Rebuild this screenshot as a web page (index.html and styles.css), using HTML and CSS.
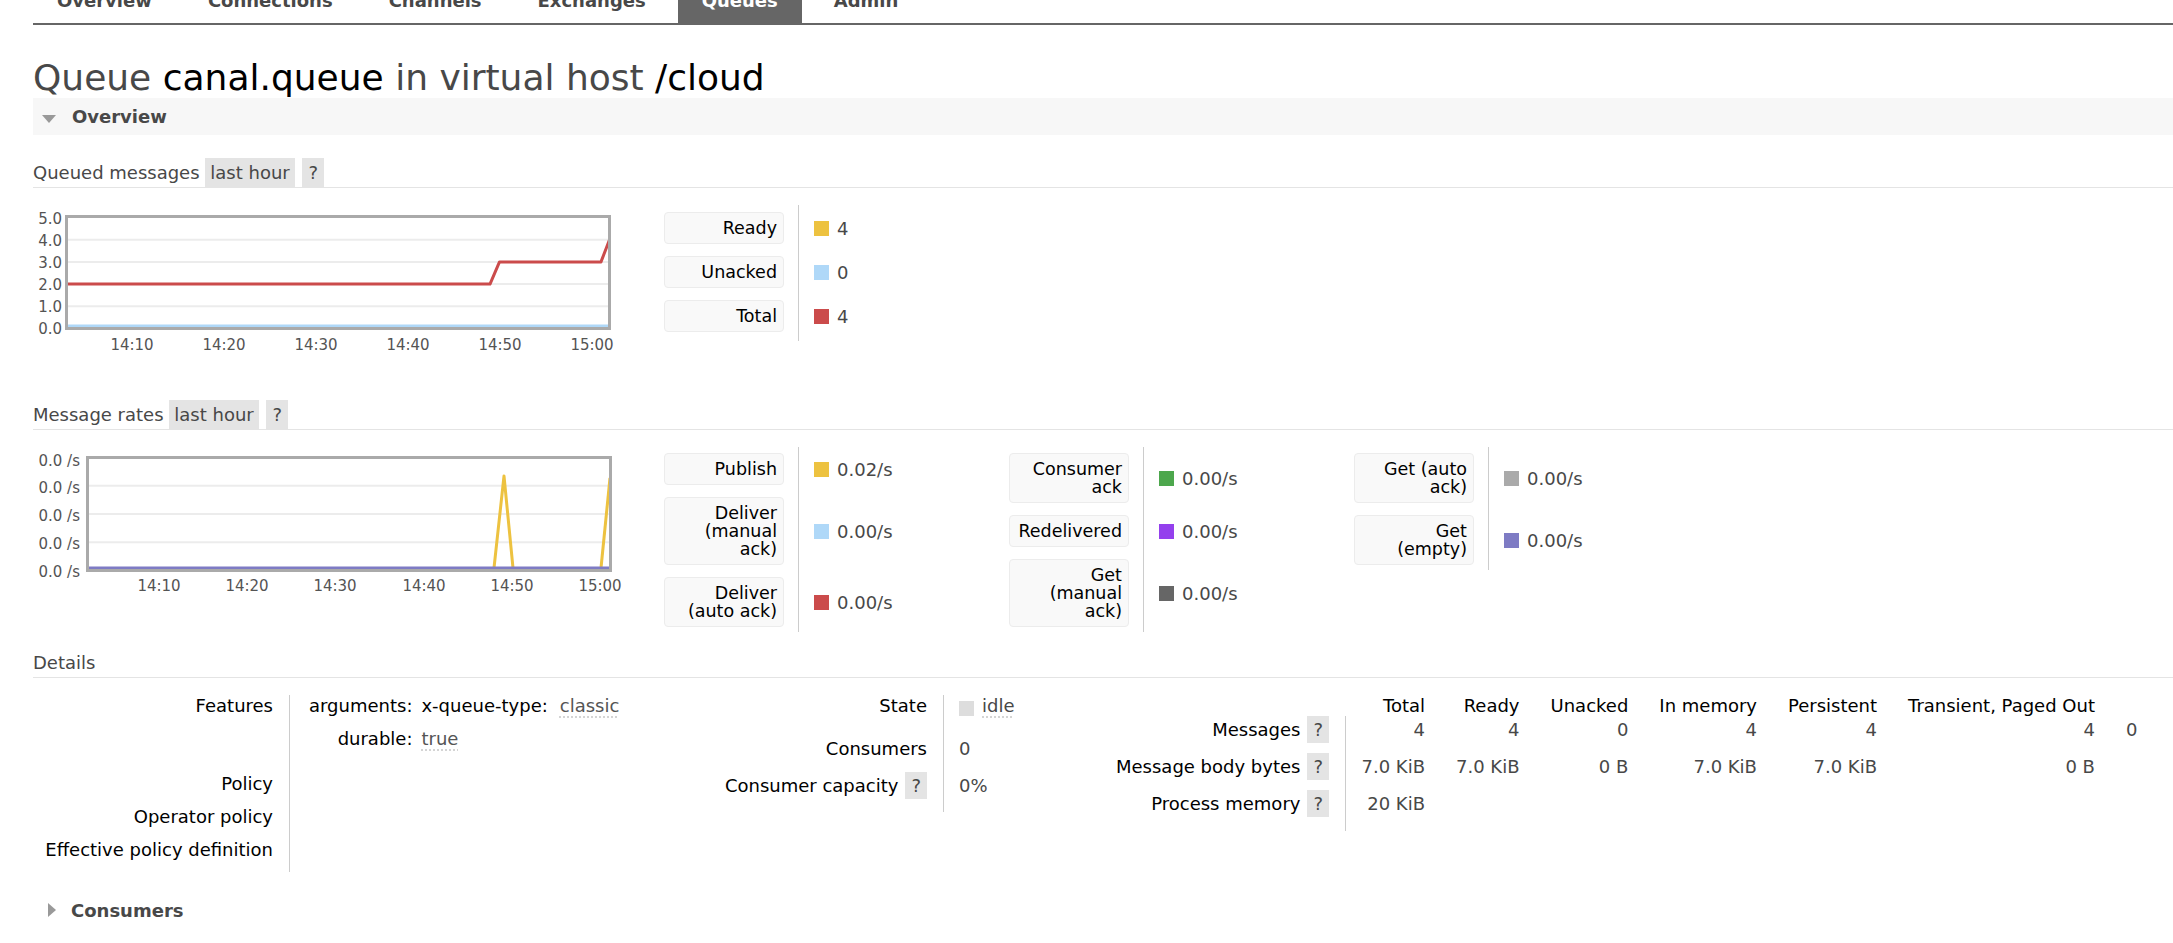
FILE: index.html
```html
<!DOCTYPE html>
<html lang="en">
<head>
  <meta charset="UTF-8">
  <meta name="viewport" content="width=device-width, initial-scale=1.0">
  <title>RabbitMQ Management</title>
  <link rel="stylesheet" href="styles.css">
</head>
<body>
<div id="menu">
  <ul>
    <li>Overview</li>
    <li>Connections</li>
    <li>Channels</li>
    <li>Exchanges</li>
    <li class="selected">Queues</li>
    <li>Admin</li>
  </ul>
</div>

<div id="main">
  <h1>Queue <b>canal.queue</b> in virtual host <b>/cloud</b></h1>

  <div class="section">
    <h2 class="section-head"><span class="tri-down"></span>Overview</h2>
    <div class="section-body">

      <h3>Queued messages <span class="pill">last hour</span> <span class="help">?</span></h3>
      <div class="chart-row">
        <svg class="chart" width="590" height="179" viewBox="0 0 590 179">
          <g class="grid">
            <line x1="35" y1="34.7" x2="575" y2="34.7"/>
            <line x1="35" y1="56.9" x2="575" y2="56.9"/>
            <line x1="35" y1="79.1" x2="575" y2="79.1"/>
            <line x1="35" y1="101.3" x2="575" y2="101.3"/>
          </g>
          <polyline class="s-blue" points="35,121 575,121"/>
          <polyline class="s-red" points="35,79.1 457,79.1 466.5,56.9 568,56.9 576.5,34.7"/>
          <rect class="frame" x="33.5" y="11.5" width="543" height="112"/>
          <g class="ylab">
            <text x="29" y="18.5">5.0</text>
            <text x="29" y="40.5">4.0</text>
            <text x="29" y="62.5">3.0</text>
            <text x="29" y="84.5">2.0</text>
            <text x="29" y="106.5">1.0</text>
            <text x="29" y="128.5">0.0</text>
          </g>
          <g class="xlab">
            <text x="99" y="144.5">14:10</text>
            <text x="191" y="144.5">14:20</text>
            <text x="283" y="144.5">14:30</text>
            <text x="375" y="144.5">14:40</text>
            <text x="467" y="144.5">14:50</text>
            <text x="559" y="144.5">15:00</text>
          </g>
        </svg>
        <div class="legends">
          <div class="legend rows-3 queued">
            <div class="lbl">Ready</div>
            <div class="sep"></div>
            <div class="val"><span class="sq c-yellow"></span>4</div>
            <div class="lbl">Unacked</div>
            <div class="val"><span class="sq c-blue"></span>0</div>
            <div class="lbl">Total</div>
            <div class="val"><span class="sq c-red"></span>4</div>
          </div>
        </div>
      </div>

      <h3>Message rates <span class="pill">last hour</span> <span class="help">?</span></h3>
      <div class="chart-row">
        <svg class="chart" width="590" height="179" viewBox="0 0 590 179">
          <g class="grid">
            <line x1="56" y1="38.75" x2="576" y2="38.75"/>
            <line x1="56" y1="67" x2="576" y2="67"/>
            <line x1="56" y1="95.25" x2="576" y2="95.25"/>
          </g>
          <polyline class="s-yellow" points="461,121 471,29 480,121"/>
          <polyline class="s-yellow" points="568,121 577,31"/>
          <polyline class="s-purple" points="56,121 576,121"/>
          <rect class="frame" x="54.5" y="10.5" width="523" height="113"/>
          <g class="ylab">
            <text x="47" y="18.5">0.0 /s</text>
            <text x="47" y="45.5">0.0 /s</text>
            <text x="47" y="73.5">0.0 /s</text>
            <text x="47" y="101.5">0.0 /s</text>
            <text x="47" y="129.5">0.0 /s</text>
          </g>
          <g class="xlab">
            <text x="126" y="143.5">14:10</text>
            <text x="214" y="143.5">14:20</text>
            <text x="302" y="143.5">14:30</text>
            <text x="391" y="143.5">14:40</text>
            <text x="479" y="143.5">14:50</text>
            <text x="567" y="143.5">15:00</text>
          </g>
        </svg>
        <div class="legends">
          <div class="legend rows-3">
            <div class="lbl">Publish</div>
            <div class="sep"></div>
            <div class="val"><span class="sq c-yellow"></span>0.02/s</div>
            <div class="lbl">Deliver<br>(manual<br>ack)</div>
            <div class="val"><span class="sq c-blue"></span>0.00/s</div>
            <div class="lbl">Deliver<br>(auto ack)</div>
            <div class="val"><span class="sq c-red"></span>0.00/s</div>
          </div>
          <div class="legend rows-3">
            <div class="lbl">Consumer<br>ack</div>
            <div class="sep"></div>
            <div class="val"><span class="sq c-green"></span>0.00/s</div>
            <div class="lbl">Redelivered</div>
            <div class="val"><span class="sq c-violet"></span>0.00/s</div>
            <div class="lbl">Get<br>(manual<br>ack)</div>
            <div class="val"><span class="sq c-dark"></span>0.00/s</div>
          </div>
          <div class="legend rows-2">
            <div class="lbl">Get (auto<br>ack)</div>
            <div class="sep"></div>
            <div class="val"><span class="sq c-grey"></span>0.00/s</div>
            <div class="lbl">Get<br>(empty)</div>
            <div class="val"><span class="sq c-lilac"></span>0.00/s</div>
          </div>
        </div>
      </div>

      <h3>Details</h3>
      <div class="details">
        <table class="facts f1">
          <tr>
            <th>Features</th>
            <td>
              <table class="mini">
                <tr>
                  <th>arguments:</th>
                  <td>
                    <table class="mini-inner">
                      <tr><th>x-queue-type:</th><td><abbr>classic</abbr></td></tr>
                    </table>
                  </td>
                </tr>
                <tr>
                  <th>durable:</th>
                  <td><abbr>true</abbr></td>
                </tr>
              </table>
            </td>
          </tr>
          <tr><th>Policy</th><td></td></tr>
          <tr><th>Operator policy</th><td></td></tr>
          <tr><th>Effective policy definition</th><td></td></tr>
        </table>

        <table class="facts f2">
          <tr class="state-row">
            <th>State</th>
            <td><span class="state-sq"></span><abbr>idle</abbr></td>
          </tr>
          <tr><th>Consumers</th><td>0</td></tr>
          <tr><th>Consumer capacity<span class="help-box">?</span></th><td>0%</td></tr>
        </table>

        <table class="facts f3">
          <tr class="head">
            <th></th>
            <th>Total</th>
            <th>Ready</th>
            <th>Unacked</th>
            <th>In memory</th>
            <th>Persistent</th>
            <th>Transient, Paged Out</th>
            <th></th>
          </tr>
          <tr>
            <th>Messages<span class="help-box">?</span></th>
            <td>4</td><td>4</td><td>0</td><td>4</td><td>4</td><td>4</td><td>0</td>
          </tr>
          <tr>
            <th>Message body bytes<span class="help-box">?</span></th>
            <td>7.0 KiB</td><td>7.0 KiB</td><td>0 B</td><td>7.0 KiB</td><td>7.0 KiB</td><td>0 B</td><td></td>
          </tr>
          <tr class="last">
            <th>Process memory<span class="help-box">?</span></th>
            <td>20 KiB</td><td></td><td></td><td></td><td></td><td></td><td></td>
          </tr>
        </table>
      </div>
    </div>
  </div>

  <div class="section">
    <h2 class="section-head collapsed"><span class="tri-right"></span>Consumers</h2>
  </div>
</div>
</body>
</html>
```

FILE: styles.css
```css
body {
  margin: 0;
  font-family: "DejaVu Sans", Verdana, sans-serif;
  font-size: 18px;
  line-height: 21px;
  color: #484848;
  background: #fff;
  overflow: hidden;
}

/* top menu, scrolled half out of view */
#menu {
  margin: -10px 0 0 33px;
  border-bottom: 2px solid #666;
}

#menu ul {
  list-style: none;
  margin: 0;
  padding: 0;
  display: flex;
}

#menu li {
  padding: 0 24px 12px;
  margin-right: 8px;
  font-weight: bold;
  color: #484848;
  white-space: nowrap;
}

#menu li.selected {
  background: #666;
  color: #fff;
}

#main {
  padding-left: 33px;
}

h1 {
  margin: 32px 0 -1px;
  font-size: 36px;
  line-height: 42px;
  font-weight: normal;
  color: #484848;
}

h1 b {
  font-weight: normal;
  color: #000;
}

.section-head {
  margin: 0;
  padding: 8px 9px;
  background: #f7f7f7;
  font-size: 18px;
  line-height: 21px;
  font-weight: bold;
  color: #484848;
}

.section-head.collapsed {
  background: none;
  margin-top: 20px;
}

.tri-down {
  display: inline-block;
  width: 0;
  height: 0;
  border-left: 7px solid transparent;
  border-right: 7px solid transparent;
  border-top: 8px solid #999;
  margin-right: 16px;
}

.tri-right {
  display: inline-block;
  width: 0;
  height: 0;
  border-top: 7.5px solid transparent;
  border-bottom: 7.5px solid transparent;
  border-left: 8px solid #999;
  margin: 0 15px 0 6px;
}

.section-body {
  padding-top: 27px;
}

h3 {
  margin: 0 0 17px;
  padding-bottom: 4px;
  font-size: 18px;
  line-height: 21px;
  font-weight: normal;
  color: #484848;
  border-bottom: 1px solid #e4e4e4;
}

.pill,
.help {
  background: #e4e4e4;
  padding: 4px 5px;
}

.help {
  padding: 4px 6px;
  margin-left: 2px;
}

/* charts + legends */
.chart-row {
  display: flex;
  align-items: flex-start;
  margin-bottom: 20px;
}

.chart {
  flex: none;
  display: block;
}

.chart .grid line {
  stroke: #ececec;
  stroke-width: 2;
}

.chart .frame {
  fill: none;
  stroke: #aaa;
  stroke-width: 3;
}

.chart polyline {
  fill: none;
  stroke-width: 3;
  stroke-linejoin: round;
}

.s-red { stroke: #cb4b4b; }
.s-blue { stroke: #afd8f8; }
.s-yellow { stroke: #edc240; }
.s-purple { stroke: #7e7bc4; }

.chart text {
  font-family: "DejaVu Sans", Verdana, sans-serif;
  font-size: 15px;
  fill: #545454;
}

.chart .ylab text { text-anchor: end; }
.chart .xlab text { text-anchor: middle; }

.legends {
  display: flex;
  align-items: flex-start;
  margin-left: 41px;
}

.legend {
  display: grid;
  grid-template-columns: 120px 1px auto;
  column-gap: 14px;
  row-gap: 12px;
  align-items: center;
  width: 345px;
  padding: 6px 0 5px;
}

.legend.queued {
  padding: 7px 0 9px;
}

.legend.rows-3 { grid-template-rows: repeat(3, auto); }
.legend.rows-2 { grid-template-rows: repeat(2, auto); }

.legend .lbl {
  grid-column: 1;
  box-sizing: border-box;
  width: 120px;
  padding: 6px 6px 6px 8px;
  background: #f9f9f9;
  border: 1px solid #ececec;
  border-radius: 4px;
  text-align: right;
  font-size: 17.5px;
  line-height: 18px;
  color: #000;
}

.legend .sep {
  grid-column: 2;
  grid-row: 1 / -1;
  align-self: stretch;
  background: #ccc;
  margin: -6px 0 -5px;
}

.legend.queued .sep {
  margin: -7px 0 -9px;
}

.legend .val {
  grid-column: 3;
  display: flex;
  align-items: center;
  gap: 8px;
  padding-left: 1px;
  white-space: nowrap;
}

.sq {
  display: inline-block;
  width: 15px;
  height: 15px;
}

.c-yellow { background: #edc240; }
.c-blue { background: #afd8f8; }
.c-red { background: #cb4b4b; }
.c-green { background: #4da74d; }
.c-violet { background: #9440ed; }
.c-dark { background: #666; }
.c-grey { background: #aaa; }
.c-lilac { background: #7e7bc4; }

/* details tables */
.details {
  display: flex;
  align-items: flex-start;
}

table {
  border-collapse: collapse;
}

.facts th,
.facts td {
  padding: 0 16px 12px;
  vertical-align: baseline;
  text-align: left;
  font-weight: normal;
}

.facts th {
  text-align: right;
  color: #000;
  white-space: nowrap;
}

.facts td {
  border-left: 1px solid #ccc;
}

abbr {
  text-decoration: underline dotted #d4d4d4;
  text-underline-offset: 5px;
}

.f1 {
  width: 679px;
}

.f1 > tbody > tr > th {
  width: 228px;
  padding-left: 12px;
}

.f1 > tbody > tr > td {
  padding-left: 19px;
}

.mini th,
.mini td {
  border: none;
  padding: 0 0 12px;
}

.mini th {
  padding-right: 9px;
}

.mini td {
  color: #555;
}

.mini-inner th,
.mini-inner td {
  padding: 0;
}

.mini-inner th {
  padding-right: 12px;
}

.f2 {
  width: 391px;
}

.f2 th,
.f2 td {
  padding-bottom: 13px;
}

.f2 th {
  width: 203px;
  padding-left: 12px;
}

.f2 td {
  padding-left: 15px;
}

.f2 .state-row th,
.f2 .state-row td {
  padding-bottom: 22px;
}

.state-sq {
  display: inline-block;
  width: 15px;
  height: 15px;
  background: #ddd;
  margin-right: 8px;
  vertical-align: -4px;
}

.help-box {
  display: inline-block;
  background: #e4e4e4;
  padding: 3px 6px;
  margin-left: 7px;
  color: #484848;
}

.f3 th,
.f3 td {
  padding: 0 15.5px 10px;
  text-align: right;
  border: none;
}

.f3 tr > th:first-child {
  width: 214px;
  padding: 0 16px 10px 12px;
}

.f3 .head th {
  padding-bottom: 0;
}

.f3 td:nth-child(2) {
  border-left: 1px solid #ccc;
}

.f3 tr.last th,
.f3 tr.last td {
  padding-bottom: 14px;
}
```
